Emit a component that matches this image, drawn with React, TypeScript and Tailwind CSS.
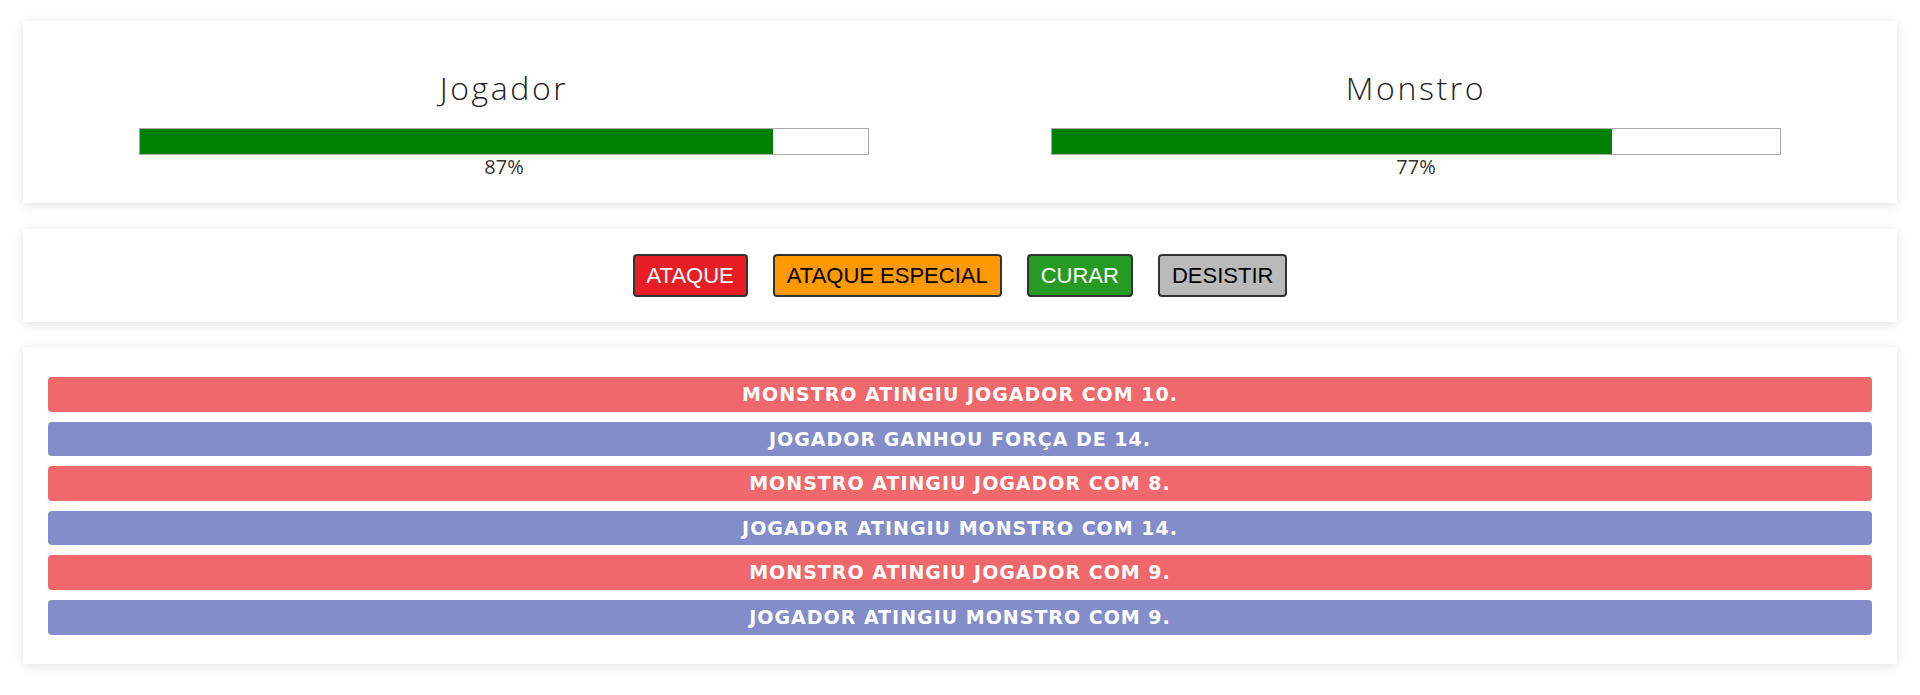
import * as React from 'react';

const logs = [
  { who: 'monster', text: 'MONSTRO ATINGIU JOGADOR COM 10.' },
  { who: 'player', text: 'JOGADOR GANHOU FORÇA DE 14.' },
  { who: 'monster', text: 'MONSTRO ATINGIU JOGADOR COM 8.' },
  { who: 'player', text: 'JOGADOR ATINGIU MONSTRO COM 14.' },
  { who: 'monster', text: 'MONSTRO ATINGIU JOGADOR COM 9.' },
  { who: 'player', text: 'JOGADOR ATINGIU MONSTRO COM 9.' },
];

const Health = ({ name, value }: { name: string; value: number }) => (
  <div className="flex-1 flex flex-col items-center">
    <h1 className="text-[32px] font-light leading-[38px] text-[#222] tracking-[2.6px]">{name}</h1>
    <div className="w-[80%] h-[27px] mt-[21px] border border-[#aaa] bg-white">
      <div className="h-full bg-[#008000]" style={{ width: `${value}%` }} />
    </div>
    <div className="text-[20px] font-normal leading-[22px] mt-[1px] text-[#333]">{value}%</div>
  </div>
);

export default function App() {
  return (
    <div className="bg-white min-h-screen px-[23px] pt-[21px] pb-[30px] font-['Open_Sans','Lato',sans-serif]">
      <section className="bg-white shadow-[0_2px_10px_rgba(0,0,0,0.12)] px-[25px] pt-[48px] h-[182px] flex">
        <Health name="Jogador" value={87} />
        <Health name="Monstro" value={77} />
      </section>

      <section className="bg-white shadow-[0_2px_10px_rgba(0,0,0,0.12)] mt-[26px] h-[93px] flex items-center justify-center gap-[25px] font-['Liberation_Sans',Arial,sans-serif] text-[22px]">
        <button className="h-[43px] px-[12px] border-2 border-[#333] rounded-[4px] bg-[#e81d25] text-white">ATAQUE</button>
        <button className="h-[43px] px-[12px] border-2 border-[#333] rounded-[4px] bg-[#ff9900] text-black">ATAQUE ESPECIAL</button>
        <button className="h-[43px] px-[12px] border-2 border-[#333] rounded-[4px] bg-[#269b24] text-white">CURAR</button>
        <button className="h-[43px] px-[12px] border-2 border-[#333] rounded-[4px] bg-[#bababa] text-black">DESISTIR</button>
      </section>

      <section className="bg-white shadow-[0_2px_10px_rgba(0,0,0,0.12)] mt-[25px] px-[25px] pt-[30px] pb-[29px]">
        <ul className="flex flex-col gap-[10px]">
          {logs.map((l, i) => (
            <li
              key={i}
              className={
                "h-[34.6px] rounded-[4px] flex items-center justify-center text-white text-[19px] font-bold tracking-[1px] font-['DejaVu_Sans',sans-serif] " +
                (l.who === 'monster' ? 'bg-[#f0686b]' : 'bg-[#828dca]')
              }
            >
              {l.text}
            </li>
          ))}
        </ul>
      </section>
    </div>
  );
}
